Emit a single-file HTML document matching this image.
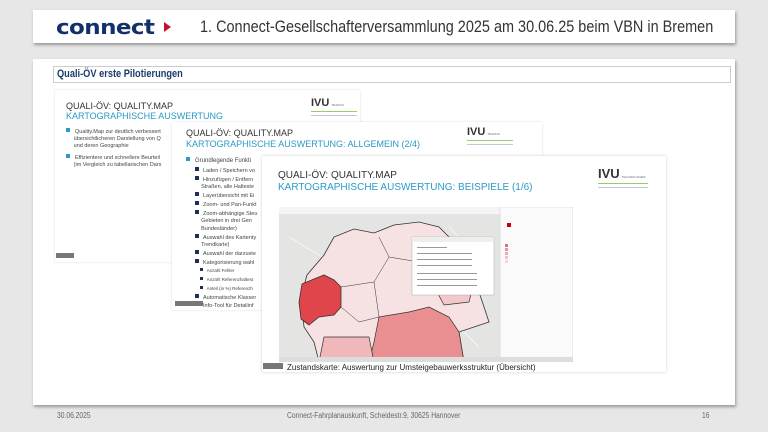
<!DOCTYPE html>
<html><head><meta charset="utf-8"><style>
body{margin:0;width:768px;height:432px;background:#e7e7e7;font-family:"Liberation Sans",sans-serif;position:relative;overflow:hidden}
.card{position:absolute;background:#fff;box-shadow:1px 2px 3px rgba(0,0,0,.35)}
.abs{position:absolute;white-space:nowrap}
.nar{transform-origin:0 0;transform:scaleX(.84)}
.sl{position:absolute;background:#fff;overflow:hidden;box-shadow:0 0 2px rgba(0,0,0,.15)}
.h1{color:#333;font-size:9px}
.h2{color:#2a9ac6;font-size:9px}
.b{font-size:5.5px;color:#444;line-height:7px}
.sq{display:inline-block;width:4px;height:4px;background:#1a2f5a;margin-right:4px;vertical-align:1px}
.sqb{display:inline-block;width:4px;height:4px;background:#2a9ac6;margin-right:5px;vertical-align:1px}
.tag{position:absolute;background:#777;color:#fff;font-size:3px;width:18px;height:5px}
.ivu{position:absolute;font-weight:bold;color:#333;font-size:11px}
.ivu i{font-style:normal;font-size:3px;color:#666;font-weight:normal;margin-left:2px}
.ivu b{position:absolute;left:0;top:14px;width:46px;height:3px;border-top:1px solid #9c6;border-bottom:1px solid #bcd}
</style></head><body>
<div class="card" style="left:33px;top:10px;width:702px;height:33px">
 <div class="abs" style="left:23px;top:5px;font-family:'DejaVu Sans',sans-serif;font-size:20px;font-weight:bold;color:#12306a;letter-spacing:-0.5px;transform-origin:0 0;transform:scaleX(1.15)">connect</div>
 <div class="abs" style="left:131px;top:12px;width:0;height:0;border-left:7px solid #c8102e;border-top:5px solid transparent;border-bottom:5px solid transparent"></div>
 <div class="abs nar" style="left:167px;top:7px;font-size:17px;color:#333;transform:scaleX(.85)">1. Connect-Gesellschafterversammlung 2025 am 30.06.25 beim VBN in Bremen</div>
</div>
<div class="card" style="left:33px;top:59px;width:702px;height:346px">
 <div class="abs" style="left:20px;top:7px;width:676px;height:15px;border:1px solid #ccc"></div>
 <div class="abs nar" style="left:24px;top:9px;font-size:11px;font-weight:bold;color:#1a3a6a">Quali-ÖV erste Pilotierungen</div>
</div>
<!-- slide 1 -->
<div class="sl" style="left:55px;top:90px;width:305px;height:172px">
 <div class="abs h1" style="left:11px;top:11px">QUALI-ÖV: QUALITY.MAP</div>
 <div class="abs h2" style="left:11px;top:21px">KARTOGRAPHISCHE AUSWERTUNG</div>
 <div class="abs b" style="left:11px;top:38px"><span class="sqb"></span>Quality.Map zur deutlich verbessert<br>&nbsp;&nbsp;&nbsp;&nbsp;&nbsp;übersichtlicheren Darstellung von Q<br>&nbsp;&nbsp;&nbsp;&nbsp;&nbsp;und deren Geographie</div>
 <div class="abs b" style="left:11px;top:64px"><span class="sqb"></span>Effizientere und schnellere Beurteil<br>&nbsp;&nbsp;&nbsp;&nbsp;&nbsp;(im Vergleich zu tabellarischen Dars</div>
 <div class="ivu" style="left:256px;top:7px">IVU<i>TRAFFIC</i><b></b></div>
 <div class="tag" style="left:1px;top:163px"></div>
</div>
<!-- slide 2 -->
<div class="sl" style="left:172px;top:122px;width:370px;height:188px">
 <div class="abs h1" style="left:14px;top:6px">QUALI-ÖV: QUALITY.MAP</div>
 <div class="abs h2" style="left:14px;top:17px">KARTOGRAPHISCHE AUSWERTUNG: ALLGEMEIN (2/4)</div>
 <div class="ivu" style="left:295px;top:4px">IVU<i>TRAFFIC</i><b></b></div>
 <div class="abs b" style="left:14px;top:35px;font-size:6px"><span class="sqb"></span>Grundlegende Funkti</div>
 <div class="abs b" style="left:23px;top:45px;line-height:7.7px">
 <span class="sq"></span>Laden / Speichern vo<br><span class="sq"></span>Hinzufügen / Entfern<br>&nbsp;&nbsp;&nbsp;&nbsp;Straßen, alle Halteste<br><span class="sq"></span>Layerübersicht mit Ei<br><span class="sq"></span>Zoom- und Pan-Funkt<br><span class="sq"></span>Zoom-abhängige Steu<br>&nbsp;&nbsp;&nbsp;&nbsp;Gebieten in drei Gen<br>&nbsp;&nbsp;&nbsp;&nbsp;Bundesländer)<br><span class="sq"></span>Auswahl des Kartenty<br>&nbsp;&nbsp;&nbsp;&nbsp;Trendkarte)<br><span class="sq"></span>Auswahl der darzuste<br><span class="sq"></span>Kategorisierung wahl<br>&nbsp;&nbsp;&nbsp;<span class="sq" style="width:3px;height:3px"></span><span style="font-size:4.5px">Anzahl Fehler</span><br>&nbsp;&nbsp;&nbsp;<span class="sq" style="width:3px;height:3px"></span><span style="font-size:4.5px">Anzahl Referenzhaltest</span><br>&nbsp;&nbsp;&nbsp;<span class="sq" style="width:3px;height:3px"></span><span style="font-size:4.5px">Anteil (in %) Referenzh</span><br><span class="sq"></span>Automatische Klasser<br><span class="sq"></span>Info-Tool für Detailinf</div>
 <div class="tag" style="left:3px;top:179px;width:28px"></div>
</div>
<!-- slide 3 -->
<div class="sl" style="left:262px;top:156px;width:404px;height:216px;box-shadow:0 0 3px rgba(0,0,0,.2)">
 <div class="abs" style="left:16px;top:14px;font-size:10px;color:#333">QUALI-ÖV: QUALITY.MAP</div>
 <div class="abs" style="left:16px;top:26px;font-size:10px;color:#2a9ac6">KARTOGRAPHISCHE AUSWERTUNG: BEISPIELE (1/6)</div>
 <div class="ivu" style="left:336px;top:10px;font-size:13px">IVU<i>TECHNOLOGIES</i><b style="top:17px;width:50px"></b></div>
 <svg class="abs" style="left:17px;top:51px" width="294" height="155" viewBox="0 0 294 155">
  <rect width="294" height="155" fill="#ececec"/>
  <rect width="294" height="7" fill="#f4f4f4"/>
  <rect x="0" y="7" width="225" height="148" fill="#e4e4e2"/>
  <g stroke="#fff" stroke-width=".6" fill="none"><path d="M10 30 L60 60 L90 120 M120 20 L150 90 L200 140 M30 100 L100 110 L180 70 M170 20 L210 60"/></g>
  <path d="M55 30 L75 22 L95 26 L115 18 L140 15 L160 20 L180 40 L195 70 L205 100 L210 115 L180 125 L185 155 L40 155 L35 135 L25 120 L22 90 L28 68 L45 48 Z" fill="#f6e2e3" stroke="#333" stroke-width=".8"/>
  <path d="M100 110 L130 105 L150 100 L170 110 L180 125 L185 155 L90 155 L95 135 Z" fill="#e98f92" stroke="#333" stroke-width=".7"/>
  <path d="M45 130 L90 130 L95 155 L40 155 Z" fill="#f0b8ba" stroke="#333" stroke-width=".7"/>
  <path d="M150 70 L175 60 L195 75 L190 95 L165 98 Z" fill="#f2c8ca" stroke="#333" stroke-width=".7"/>
  <path d="M23 77 L35 72 L45 68 L55 73 L62 80 L62 100 L55 108 L40 110 L30 118 L22 112 L20 95 Z" fill="#e0454b" stroke="#333" stroke-width=".8"/>
  <g stroke="#333" stroke-width=".5" fill="none"><path d="M62 80 L95 75 L100 110 M95 75 L110 50 L140 55 L150 70 M110 50 L100 30 M62 100 L80 115 L100 110"/></g>
  <rect x="221" y="0" width="73" height="155" fill="#fafafa" stroke="#ccc" stroke-width=".5"/>
  <g fill="#e07077"><rect x="226" y="37" width="3" height="3"/><rect x="226" y="41" width="3" height="3" fill="#e8949a"/><rect x="226" y="45" width="3" height="3" fill="#eeaab0"/><rect x="226" y="49" width="3" height="3" fill="#f2c0c3"/><rect x="226" y="53" width="3" height="3" fill="#f6d6d8"/></g>
  <rect x="228" y="16" width="4" height="4" fill="#c00"/>
  <rect x="133" y="30" width="82" height="58" fill="#fff" stroke="#aaa" stroke-width=".5"/>
  <rect x="133" y="30" width="82" height="5" fill="#eee"/>
  <g fill="#999"><rect x="138" y="40" width="30" height="1"/><rect x="138" y="46" width="55" height="1"/><rect x="138" y="52" width="55" height="1"/><rect x="138" y="58" width="55" height="1"/><rect x="138" y="66" width="60" height="1"/><rect x="138" y="72" width="60" height="1"/><rect x="138" y="78" width="60" height="1"/></g>
  <rect x="0" y="150" width="294" height="5" fill="#ddd"/>
 </svg>
 <div class="tag" style="left:1px;top:207px;width:20px;height:6px"></div>
 <div class="abs" style="left:25px;top:207px;font-size:8px;color:#222">Zustandskarte: Auswertung zur Umsteigebauwerksstruktur (Übersicht)</div>
</div>
<div class="abs nar" style="left:57px;top:411px;font-size:8px;color:#666">30.06.2025</div>
<div class="abs nar" style="left:287px;top:411px;font-size:8px;color:#666">Connect-Fahrplanauskunft, Scheidestr.9, 30625 Hannover</div>
<div class="abs nar" style="left:702px;top:411px;font-size:8px;color:#666">16</div>
</body></html>
